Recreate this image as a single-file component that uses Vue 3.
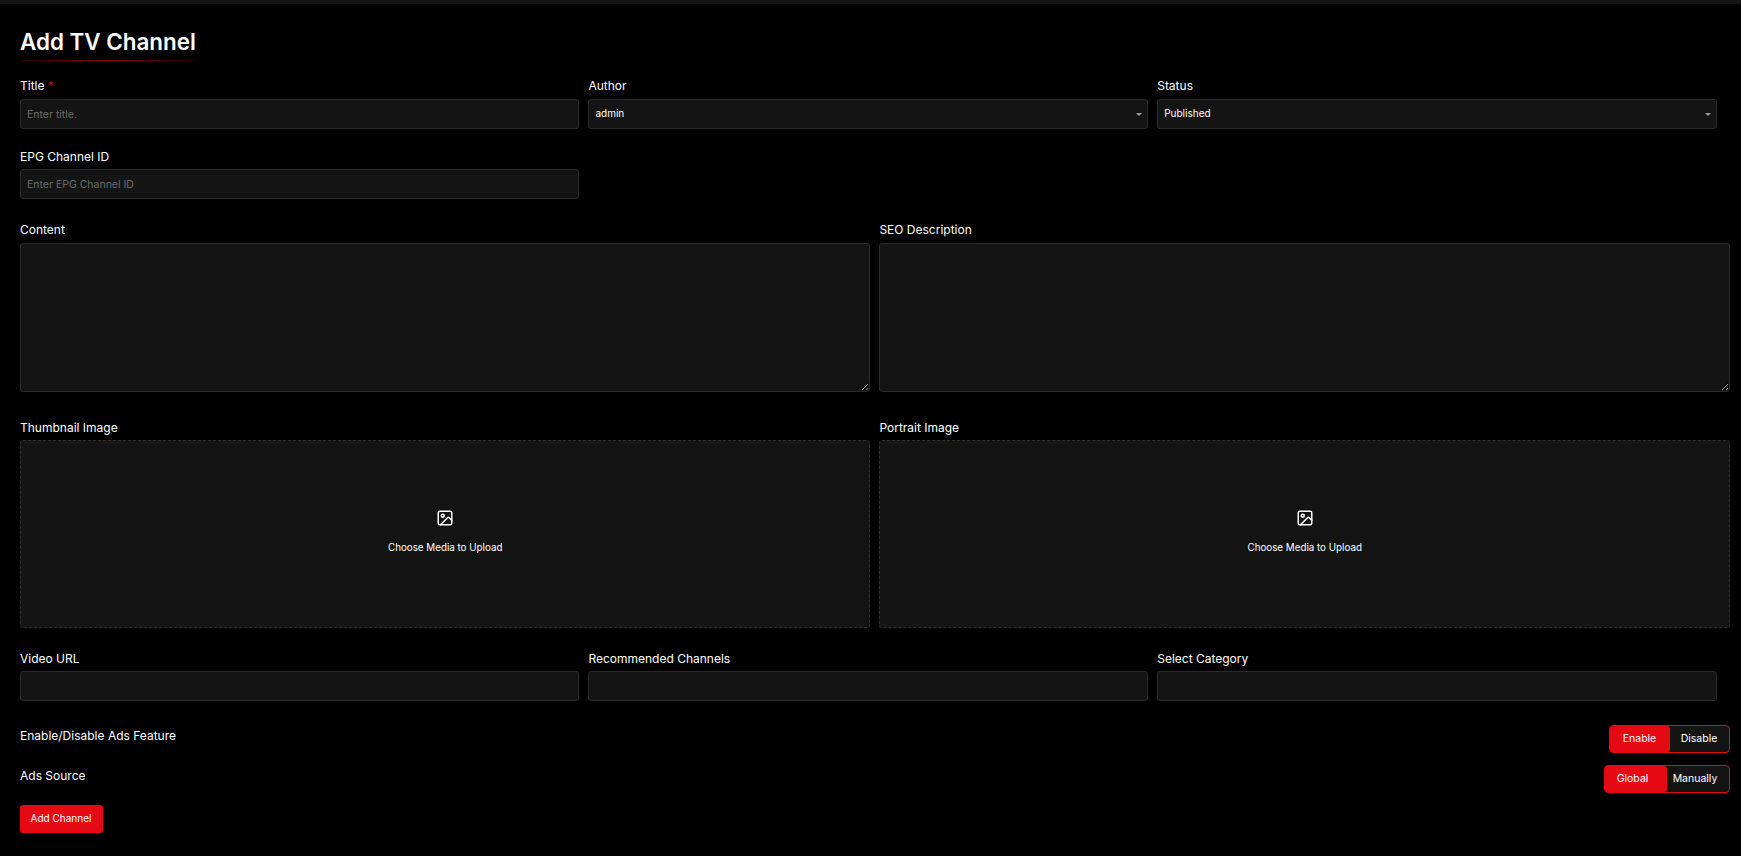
<script setup>
const mediaFields = ['Thumbnail Image', 'Portrait Image']
const emptyFields = ['Video URL', 'Recommended Channels', 'Select Category']
</script>

<template>
  <div class="topbar"></div>
  <main class="page">
    <h1 class="title">Add TV Channel</h1>

    <div class="row three first">
      <div class="field">
        <label>Title <span class="req">*</span></label>
        <input class="control" placeholder="Enter title." />
      </div>
      <div class="field">
        <label>Author</label>
        <div class="control select">admin</div>
      </div>
      <div class="field">
        <label>Status</label>
        <div class="control select">Published</div>
      </div>
    </div>

    <div class="row three epg">
      <div class="field">
        <label>EPG Channel ID</label>
        <input class="control" placeholder="Enter EPG Channel ID" />
      </div>
    </div>

    <div class="row two content">
      <div class="field">
        <label>Content</label>
        <textarea class="control area"></textarea>
      </div>
      <div class="field">
        <label>SEO Description</label>
        <textarea class="control area"></textarea>
      </div>
    </div>

    <div class="row two media">
      <div v-for="name in mediaFields" :key="name" class="field">
        <label>{{ name }}</label>
        <div class="drop">
          <svg class="icon" viewBox="0 0 24 24" width="18" height="18" fill="none" stroke="#fff" stroke-width="2" stroke-linecap="round" stroke-linejoin="round">
            <rect x="3" y="3" width="18" height="18" rx="2" />
            <circle cx="9" cy="9" r="2" />
            <path d="m21 15-3.086-3.086a2 2 0 0 0-2.828 0L6 21" />
          </svg>
          <span>Choose Media to Upload</span>
        </div>
      </div>
    </div>

    <div class="row three video">
      <div v-for="name in emptyFields" :key="name" class="field">
        <label>{{ name }}</label>
        <div class="control"></div>
      </div>
    </div>

    <div class="switch-row ads">
      <span class="switch-label">Enable/Disable Ads Feature</span>
      <div class="toggle">
        <button class="on enable">Enable</button>
        <button class="off disable">Disable</button>
      </div>
    </div>
    <div class="switch-row source">
      <span class="switch-label">Ads Source</span>
      <div class="toggle">
        <button class="on global">Global</button>
        <button class="off manual">Manually</button>
      </div>
    </div>

    <button class="submit">Add Channel</button>
  </main>
</template>

<style>
html, body { background: #000; margin: 0; }
</style>

<style scoped>
.topbar { height: 4px; background: #141414; }
.page {
  box-sizing: border-box;
  width: 1741px;
  height: 852px;
  padding: 0 11px 0 20px;
  background: #000;
  font-family: Inter, "Liberation Sans", sans-serif;
  color: #fff;
  overflow: hidden;
}
.title {
  display: inline-block;
  margin: 24px 0 0;
  padding-bottom: 6px;
  font-size: 22.4px;
  line-height: 27px;
  font-weight: 600;
  position: relative;
}
.title::after {
  content: "";
  position: absolute;
  left: 0;
  right: 0;
  bottom: 0;
  height: 1px;
  background: linear-gradient(90deg, #2a0004, #96000a 50%, #1e0003);
}
.row { display: grid; column-gap: 9px; }
.three { grid-template-columns: 559.4px 559.8px 559.8px; }
.two { grid-template-columns: 850.4px 1fr; }
.first { margin-top: 17px; }
.epg { margin-top: 20px; }
.content { margin-top: 23px; }
.media { margin-top: 28px; }
.video { margin-top: 23px; }
.field { display: flex; flex-direction: column; min-width: 0; }
label {
  font-size: 12px;
  line-height: 16px;
  height: 16px;
  margin-bottom: 5px;
  color: #fff;
}
.epg label, .media label, .video label { margin-bottom: 4px; }
.req { color: #b3101a; }
.control {
  box-sizing: border-box;
  display: block;
  width: 100%;
  height: 30px;
  padding: 0 6px;
  background: #141414;
  border: 1px solid #2a2a2a;
  border-radius: 3px;
  color: #fff;
  font-family: inherit;
  font-size: 10.5px;
  line-height: 28px;
  outline: none;
}
.control::placeholder { color: #6c6c6c; opacity: 1; }
.select { position: relative; font-size: 10px; line-height: 26px; }
.select::after {
  content: "";
  position: absolute;
  right: 5px;
  top: 13px;
  border-left: 3px solid transparent;
  border-right: 3px solid transparent;
  border-top: 3px solid #9a9a9a;
}
.area { height: 149px; resize: vertical; }
.drop {
  box-sizing: border-box;
  height: 188px;
  background: #141414;
  border: 1px dashed #2f2f2f;
  border-radius: 3px;
  display: flex;
  flex-direction: column;
  align-items: center;
  padding-top: 68px;
  font-size: 9.8px;
  line-height: 14px;
}
.icon { display: block; margin-bottom: 14px; }
.switch-row {
  display: flex;
  justify-content: space-between;
  align-items: flex-start;
}
.ads { margin-top: 24px; }
.source { margin-top: 12px; }
.switch-label { font-size: 12px; line-height: 20px; padding-top: 1px; }
.toggle {
  display: flex;
  box-sizing: border-box;
  height: 28px;
  border: 1px solid #e50914;
  border-radius: 4px;
  background: #141414;
}
.toggle button {
  box-sizing: border-box;
  height: 100%;
  padding: 0 0 2px;
  border: 0;
  font-family: inherit;
  font-size: 10.5px;
  color: #fff;
  background: transparent;
}
.toggle .on { background: #e50914; border-radius: 3px; }
.toggle .enable { width: 60px; padding-right: 1px; }
.toggle .disable { width: 59px; padding-right: 1px; }
.toggle .global { width: 62px; padding-right: 7px; }
.toggle .manual { width: 62px; padding-right: 6px; }
.submit {
  display: block;
  box-sizing: border-box;
  width: 83px;
  height: 28px;
  margin-top: 12px;
  padding: 0 1px 2px 0;
  border: 0;
  border-radius: 3px;
  background: #e50914;
  color: #fff;
  font-family: inherit;
  font-size: 10px;
}
</style>
